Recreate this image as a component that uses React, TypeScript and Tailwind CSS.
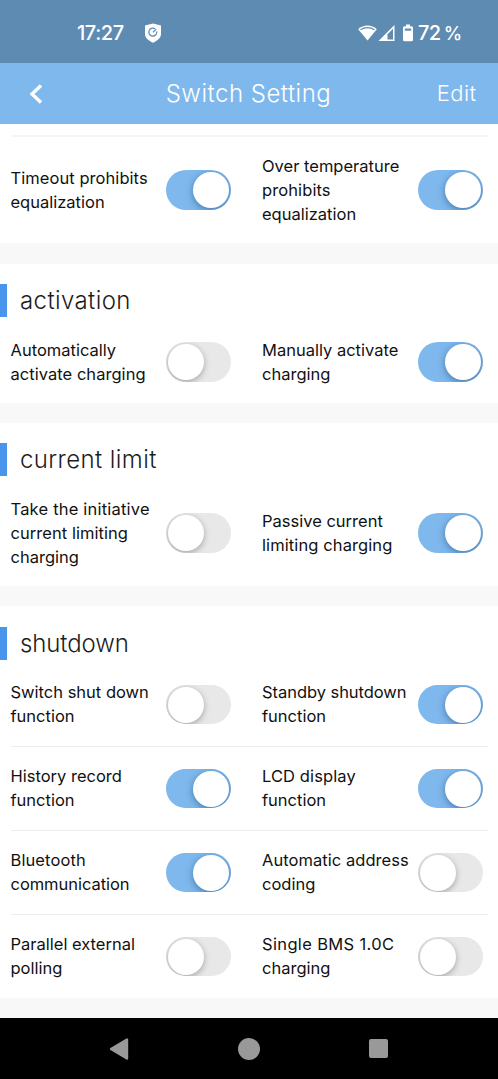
import React from "react";

type Line = [text: string, tracking?: string];
type Item = { lines: Line[]; on: boolean };

function Toggle({ on }: { on: boolean }) {
  return (
    <span
      role="switch"
      aria-checked={on}
      className={`flex h-[39.5px] w-[65px] shrink-0 items-center overflow-hidden rounded-full px-[2px] ${
        on ? "justify-end bg-[#7eb8ed]" : "justify-start bg-[#e8e8e8]"
      }`}
    >
      <span
        className={`size-9 rounded-full bg-white ${
          on
            ? "shadow-[0_2px_7px_rgba(20,60,110,0.5)]"
            : "shadow-[0_2px_6px_rgba(0,0,0,0.3)]"
        }`}
      />
    </span>
  );
}

function Cell({ item, first }: { item: Item; first?: boolean }) {
  return (
    <div className={`flex shrink-0 items-center ${first ? "w-[251.5px]" : "w-[220px]"}`}>
      <div className="w-[155.5px] shrink-0 pb-px">
        {item.lines.map(([text, tracking]) => (
          <div
            key={text}
            className={`h-6 text-[16.5px] leading-6 whitespace-nowrap ${tracking ?? "tracking-[0px]"}`}
          >
            {text}
          </div>
        ))}
      </div>
      <Toggle on={item.on} />
    </div>
  );
}

function Row({ items, height, line }: { items: [Item, Item]; height: string; line?: boolean }) {
  return (
    <div className={`mr-[10px] ml-[10.5px] flex items-stretch ${height} ${line ? "border-b border-[#ececec]" : ""}`}>
      <Cell item={items[0]} first />
      <Cell item={items[1]} />
    </div>
  );
}

function Heading({
  children,
  height,
  tracking,
}: {
  children: React.ReactNode;
  height: string;
  tracking: string;
}) {
  return (
    <div className={`flex items-start pt-5 ${height}`}>
      <span className="h-[33px] w-[7px] bg-[#4a95ec]" />
      <h2 className={`ml-[13px] text-[24px] leading-[33px] font-[350] text-[#1d1d1d] ${tracking}`}>{children}</h2>
    </div>
  );
}

const Gap = () => <div className="h-5 shrink-0 bg-[#f8f8f8]" />;

export default function App() {
  return (
    <div className="flex h-[1079px] w-[498px] flex-col overflow-hidden bg-white font-['Inter',sans-serif] text-[#111]">
      <div className="flex h-[63px] shrink-0 items-center bg-[#5e8bb2] pt-[2px] pr-[36px] pl-[77px] text-white">
        <span className="w-[49px] text-[20px] font-medium tracking-[-0.45px]">17:27</span>
        <svg className="ml-[18px]" width="18" height="20" viewBox="0 0 18 20">
          <path d="M9 .5 17 2.5V11c0 4-3.500 6.700-8 8.700C4.500 17.700 1 15 1 11V2.500Z" fill="white" />
          <path
            d="M11 5.700A4 4 0 1 0 12.800 8.400M9 9.200l3.300-3.100"
            fill="none"
            stroke="#5e8bb2"
            strokeWidth="1.200"
          />
        </svg>
        <div className="ml-auto flex items-center">
          <svg width="56" height="20" viewBox="0 0 56 20">
            <path d="M.2 6.200C5.500 1.200 13.500 1.200 18.800 6.200L9.500 17.500Z" fill="white" />
            <path d="M2.500 6.800C6.500 3.900 12.500 3.900 16.500 6.800" fill="none" stroke="#5e8bb2" strokeWidth="1.200" />
            <path d="M20.500 18 36.500 2V18Z" fill="white" />
            <path d="M29.500 11.200 35 5.700V16.500H29.500Z" fill="#5e8bb2" />
            <path
              d="M48 1.500h4v1.700h1.500q1.500 0 1.500 1.500v12q0 1.500-1.500 1.500h-7q-1.500 0-1.500-1.500v-12q0-1.500 1.500-1.500h1.500Z"
              fill="white"
            />
            <path d="M46.800 5.500h6.400v2.200h-6.400Z" fill="#5e8bb2" />
          </svg>
          <span className="ml-[4px] flex w-[44px] items-baseline justify-between text-[20px] font-medium">
            <span className="tracking-[-0.8px]">72</span>
            <span className="text-[18.5px]">%</span>
          </span>
        </div>
      </div>
      <header className="grid h-[61px] shrink-0 grid-cols-[120px_1fr_120px] items-center bg-[#7eb8ed] text-white">
        <svg className="ml-[29px]" width="14" height="20" viewBox="0 0 14 20">
          <path d="M12 1.500 3 10l9 8.500" fill="none" stroke="white" strokeWidth="3.400" />
        </svg>
        <h1 className="pr-px text-center text-[24px] font-[350] tracking-[0.5px] whitespace-nowrap">Switch Setting</h1>
        <span className="pr-[21.5px] text-right text-[22px] font-[350] tracking-[0.4px]">Edit</span>
      </header>

      <main className="flex grow flex-col">
        <div className="mr-[10px] ml-[11px] h-[13px] shrink-0 border-b-2 border-[#f5f5f5]" />
        <Row
          height="h-[106px]"
          items={[
            { lines: [["Timeout prohibits", "tracking-[0.06px]"], ["equalization"]], on: true },
            { lines: [["Over temperature"], ["prohibits", "tracking-[0.1px]"], ["equalization"]], on: true },
          ]}
        />
        <div className="h-[21px] shrink-0 bg-[#f8f8f8]" />
        <section>
          <Heading height="h-[57px]" tracking="tracking-[0.4px]">activation</Heading>
          <Row
            height="h-[82px]"
            items={[
              { lines: [["Automatically"], ["activate charging", "tracking-[0.04px]"]], on: false },
              { lines: [["Manually activate"], ["charging"]], on: true },
            ]}
          />
        </section>
        <Gap />
        <section>
          <Heading height="h-[57px]" tracking="tracking-[0.4px]">current limit</Heading>
          <Row
            height="h-[106px]"
            items={[
              {
                lines: [["Take the initiative", "tracking-[0.2px]"], ["current limiting", "tracking-[0.05px]"], ["charging"]],
                on: false,
              },
              { lines: [["Passive current"], ["limiting charging", "tracking-[0.1px]"]], on: true },
            ]}
          />
        </section>
        <Gap />
        <section className="mt-px">
          <Heading height="h-[56px]" tracking="tracking-[-0.1px]">shutdown</Heading>
          <Row
            height="h-[84px]"
            line
            items={[
              { lines: [["Switch shut down"], ["function"]], on: false },
              { lines: [["Standby shutdown", "tracking-[-0.05px]"], ["function"]], on: true },
            ]}
          />
          <Row
            height="h-[84px]"
            line
            items={[
              { lines: [["History record"], ["function"]], on: true },
              { lines: [["LCD display", "tracking-[0.1px]"], ["function"]], on: true },
            ]}
          />
          <Row
            height="h-[84px]"
            line
            items={[
              { lines: [["Bluetooth", "tracking-[0.1px]"], ["communication", "tracking-[-0.05px]"]], on: true },
              { lines: [["Automatic address", "tracking-[0.05px]"], ["coding"]], on: false },
            ]}
          />
          <Row
            height="h-[83px]"
            items={[
              { lines: [["Parallel external"], ["polling"]], on: false },
              { lines: [["Single BMS 1.0C", "tracking-[0.35px]"], ["charging"]], on: false },
            ]}
          />
        </section>
        <Gap />
      </main>

      <nav className="flex h-[61px] shrink-0 items-center justify-between bg-black pr-[110px] pl-[109px]">
        <svg width="20" height="22" viewBox="0 0 20 22">
          <path d="M2 11 18 1.500V20.500Z" fill="#999" stroke="#999" strokeWidth="2.400" strokeLinejoin="round" />
        </svg>
        <span className="size-[22px] rounded-full bg-[#999]" />
        <span className="size-[19px] rounded-[2px] bg-[#999]" />
      </nav>
    </div>
  );
}
